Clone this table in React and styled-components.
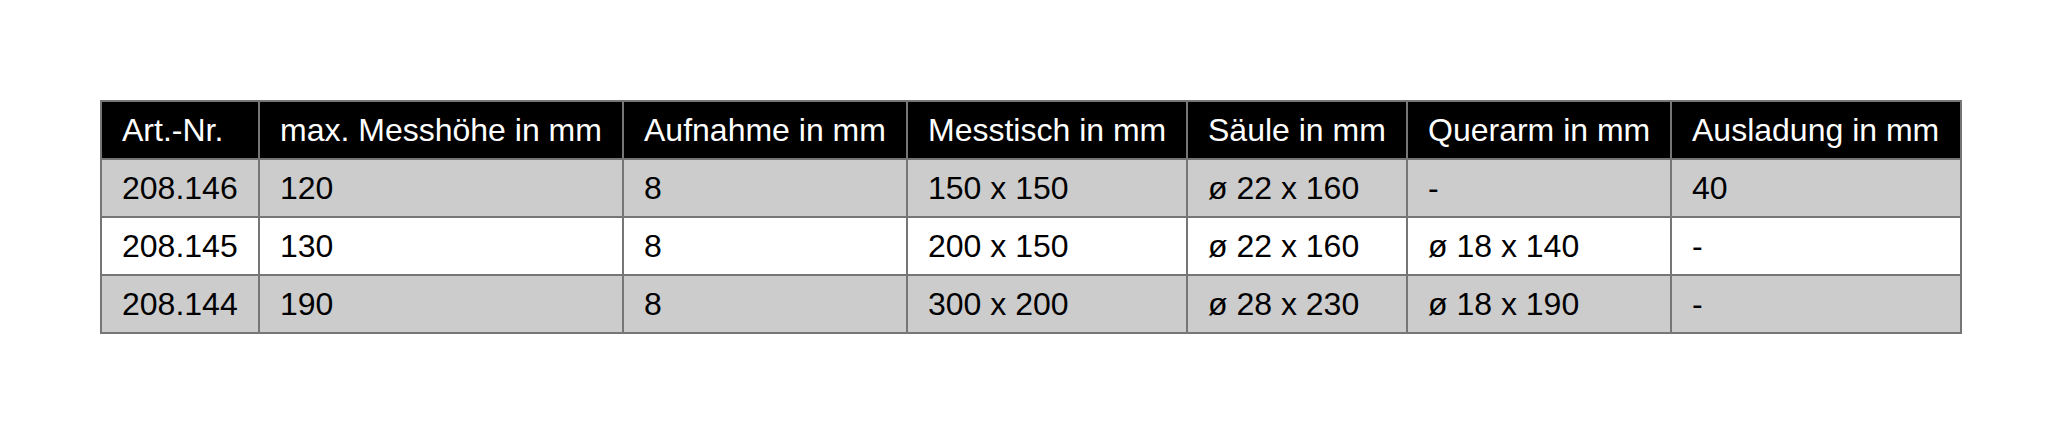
import React from "react";
import styled, { createGlobalStyle } from "styled-components";

const GlobalStyle = createGlobalStyle`
  html, body {
    margin: 0;
    padding: 0;
    background: #ffffff;
  }
  body {
    font-family: "Liberation Sans", Arial, sans-serif;
    color: #000000;
  }
`;

const columns = [
  { title: "Art.-Nr.", width: 158 },
  { title: "max. Messhöhe in mm", width: 364 },
  { title: "Aufnahme in mm", width: 284 },
  { title: "Messtisch in mm", width: 280 },
  { title: "Säule in mm", width: 220 },
  { title: "Querarm in mm", width: 264 },
  { title: "Ausladung in mm", width: 290 },
];

const rows = [
  ["208.146", "120", "8", "150 x 150", "ø 22 x 160", "-", "40"],
  ["208.145", "130", "8", "200 x 150", "ø 22 x 160", "ø 18 x 140", "-"],
  ["208.144", "190", "8", "300 x 200", "ø 28 x 230", "ø 18 x 190", "-"],
];

function SpecTable() {
  return (
    <Wrapper>
      <Table>
        <colgroup>
          {columns.map((c) => (
            <col key={c.title} style={{ width: c.width }} />
          ))}
        </colgroup>
        <thead>
          <tr>
            {columns.map((c) => (
              <HeadCell key={c.title}>{c.title}</HeadCell>
            ))}
          </tr>
        </thead>
        <tbody>
          {rows.map((row, i) => (
            <Row key={row[0]} $shaded={i % 2 === 0}>
              {row.map((value, j) => (
                <Cell key={j}>{value}</Cell>
              ))}
            </Row>
          ))}
        </tbody>
      </Table>
    </Wrapper>
  );
}

const Wrapper = styled.div`
  padding: 100px 0 100px 100px;
`;

const Table = styled.table`
  border-collapse: collapse;
  table-layout: fixed;
  width: 1862px;
  border: 2px solid #767676;
`;

const HeadCell = styled.th`
  background: #000000;
  color: #ffffff;
  font-weight: 400;
  text-align: left;
  font-size: 32px;
  line-height: 36px;
  padding: 10px 20px;
  border: 2px solid #767676;
  white-space: nowrap;
`;

const Row = styled.tr`
  background: ${(p) => (p.$shaded ? "#cccccc" : "#ffffff")};
`;

const Cell = styled.td`
  font-size: 32px;
  line-height: 36px;
  padding: 10px 20px;
  border: 2px solid #767676;
  white-space: nowrap;
`;

export default function App() {
  return (
    <>
      <GlobalStyle />
      <SpecTable />
    </>
  );
}
